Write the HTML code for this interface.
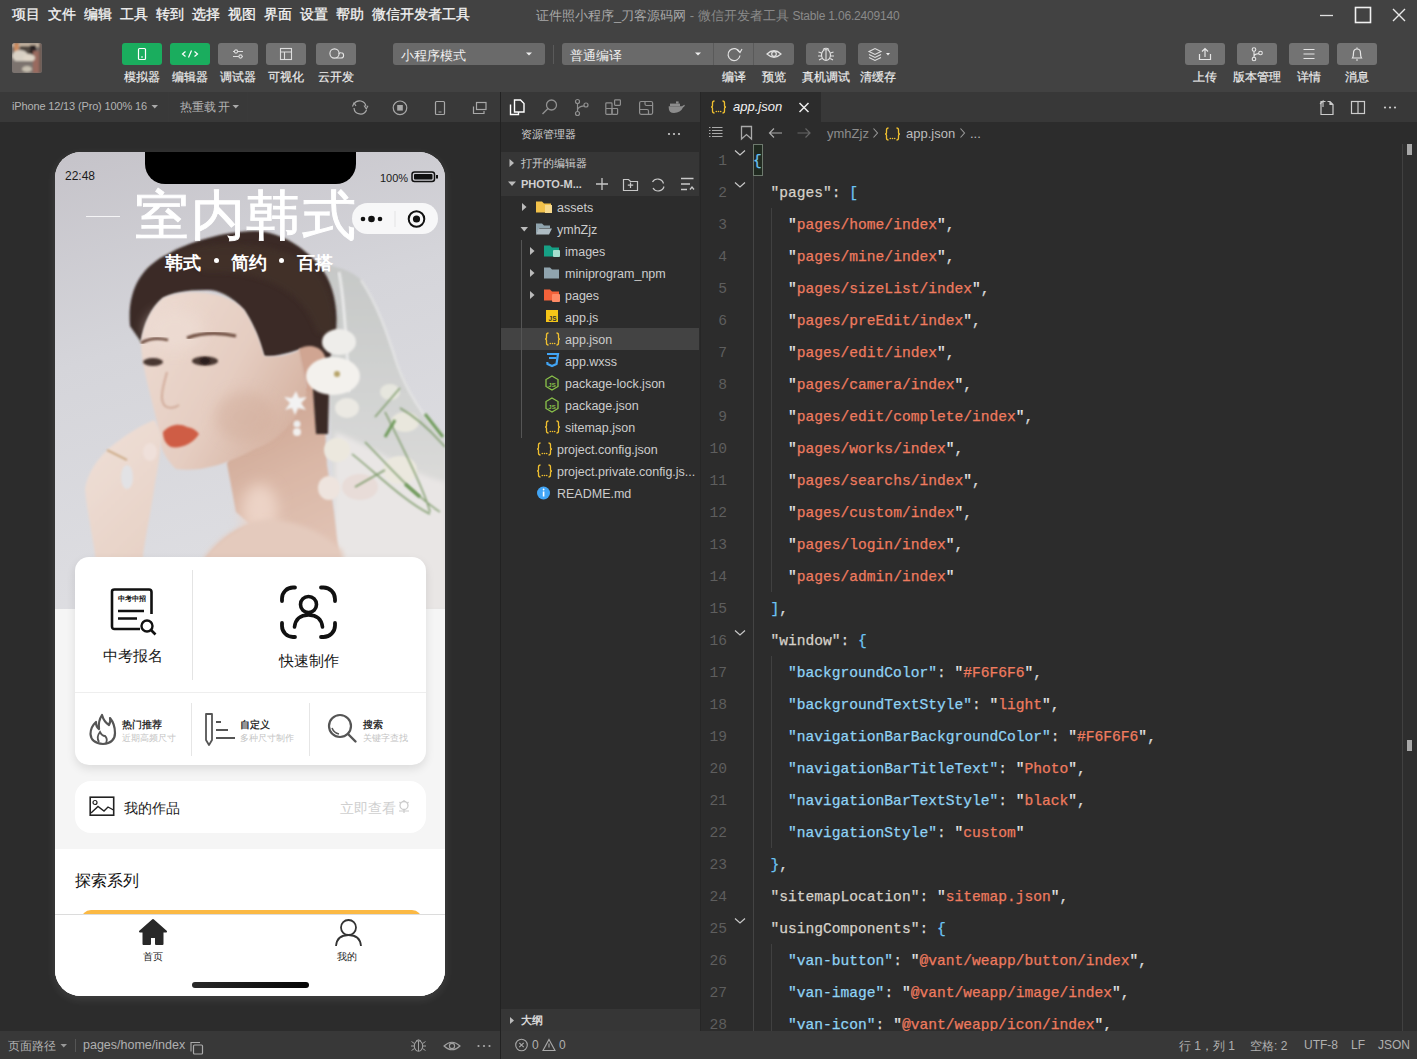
<!DOCTYPE html>
<html><head><meta charset="utf-8">
<style>
*{box-sizing:border-box;margin:0;padding:0}
html,body{width:1417px;height:1059px;overflow:hidden;background:#2c2c2c;font-family:"Liberation Sans",sans-serif;color:#ddd}
.a{position:absolute}
#top{left:0;top:0;width:1417px;height:92px;background:#424242}
.menu{top:6px;font-size:14px;color:#f4f4f4;white-space:nowrap;-webkit-text-stroke:0.3px #f4f4f4}
.tb{height:22px;border-radius:3px;background:#737373}
.tb.g{background:#1aad5e}
.tb svg{position:absolute;left:0;top:0}
.lbl{font-size:12px;color:#ececec;white-space:nowrap;width:80px;text-align:center;top:69px;-webkit-text-stroke:0.2px #e6e6e6}
svg{display:block}
.ico{stroke:#c8c8c8;fill:none;stroke-width:1.3}
.ln{left:0;width:26px;text-align:right;font-family:"Liberation Mono",monospace;font-size:14.6px;line-height:32px;color:#5e5e5e}
.code{font-family:"Liberation Mono",monospace;font-size:14.6px;line-height:32px;white-space:pre;-webkit-text-stroke:0.25px currentColor}
</style></head><body>
<div id="top" class="a">
  <div class="a menu" style="left:12px">项目</div>
  <div class="a menu" style="left:48px">文件</div>
  <div class="a menu" style="left:84px">编辑</div>
  <div class="a menu" style="left:120px">工具</div>
  <div class="a menu" style="left:156px">转到</div>
  <div class="a menu" style="left:192px">选择</div>
  <div class="a menu" style="left:228px">视图</div>
  <div class="a menu" style="left:264px">界面</div>
  <div class="a menu" style="left:300px">设置</div>
  <div class="a menu" style="left:336px">帮助</div>
  <div class="a menu" style="left:372px">微信开发者工具</div>
  <div class="a" style="left:536px;top:7px;font-size:13px;white-space:nowrap"><span style="color:#a8a8a8">证件照小程序_刀客源码网</span><span style="color:#8a8a8a"> - 微信开发者工具 <span style="font-size:12px;letter-spacing:-0.2px">Stable 1.06.2409140</span></span></div>
  <!-- window controls -->
  <svg class="a" style="left:1310px;top:0" width="107" height="30">
    <line x1="10" y1="15.5" x2="23" y2="15.5" stroke="#e0e0e0" stroke-width="1.3"/>
    <rect x="45.5" y="7.5" width="15" height="15" stroke="#f0f0f0" stroke-width="1.6" fill="none"/>
    <path d="M83 9 L95 21 M95 9 L83 21" stroke="#e8e8e8" stroke-width="1.4"/>
  </svg>
  <!-- avatar -->
  <svg class="a" style="left:12px;top:43px" width="30" height="30">
    <defs><clipPath id="av"><rect width="30" height="30" rx="2.5"/></clipPath><filter id="avb"><feGaussianBlur stdDeviation="1.1"/></filter></defs>
    <g clip-path="url(#av)">
      <rect width="30" height="30" fill="#77706c"/>
      <g filter="url(#avb)">
        <rect x="0" y="0" width="30" height="4" fill="#c9b8a4"/>
        <rect x="2" y="0" width="5" height="9" fill="#c98a5e"/>
        <rect x="8" y="3" width="12" height="10" fill="#504640"/>
        <rect x="18" y="2" width="6" height="11" fill="#2a2020"/>
        <rect x="21" y="8" width="9" height="22" fill="#9a6a5e"/>
        <ellipse cx="8" cy="13" rx="8" ry="6" fill="#d8d0c4"/>
        <ellipse cx="17" cy="15" rx="6" ry="4" fill="#e0d6c8"/>
        <rect x="0" y="18" width="21" height="12" fill="#7c736e"/>
        <ellipse cx="15" cy="26" rx="5" ry="3" fill="#c8c0b0"/>
        <rect x="27" y="0" width="3" height="30" fill="#6c5a52"/>
      </g>
    </g>
  </svg>
  <!-- left buttons -->
  <div class="a tb g" style="left:122px;top:43px;width:40px">
    <svg width="40" height="22"><rect x="16.5" y="5.5" width="7" height="11" rx="1" stroke="#fff" stroke-width="1.2" fill="none"/><line x1="19" y1="14" x2="21" y2="14" stroke="#fff" stroke-width="1"/></svg></div>
  <div class="a tb g" style="left:170px;top:43px;width:40px">
    <svg width="40" height="22"><path d="M15.5 8.5 L12.5 11 L15.5 13.5 M24.5 8.5 L27.5 11 L24.5 13.5 M21.5 7.5 L18.5 14.5" stroke="#fff" stroke-width="1.2" fill="none"/></svg></div>
  <div class="a tb" style="left:218px;top:43px;width:40px">
    <svg width="40" height="22"><path d="M15 8.5 H25 M15 13.5 H25" stroke="#ddd" stroke-width="1.1"/><circle cx="18" cy="8.5" r="1.6" fill="#6e6e6e" stroke="#ddd" stroke-width="1.1"/><circle cx="22.5" cy="13.5" r="1.6" fill="#6e6e6e" stroke="#ddd" stroke-width="1.1"/></svg></div>
  <div class="a tb" style="left:266px;top:43px;width:40px">
    <svg width="40" height="22"><rect x="14.5" y="5.5" width="11" height="11" stroke="#ddd" stroke-width="1.1" fill="none"/><path d="M14.5 9 H25.5 M18.5 9 V16.5" stroke="#ddd" stroke-width="1.1"/></svg></div>
  <div class="a tb" style="left:316px;top:43px;width:40px">
    <svg width="40" height="22"><circle cx="18.5" cy="10.5" r="4.6" stroke="#e6e6e6" stroke-width="1.1" fill="none"/><path d="M20.5 15 H25 A2.6 2.6 0 0 0 25 9.8 A2.6 2.6 0 0 0 22.8 10.8" stroke="#e6e6e6" stroke-width="1.1" fill="none"/></svg></div>
  <div class="a lbl" style="left:102px">模拟器</div>
  <div class="a lbl" style="left:150px">编辑器</div>
  <div class="a lbl" style="left:198px">调试器</div>
  <div class="a lbl" style="left:246px">可视化</div>
  <div class="a lbl" style="left:296px">云开发</div>
  <!-- mode dropdown -->
  <div class="a tb" style="left:393px;top:43px;width:152px;background:#6a6a6a">
    <div class="a" style="left:8px;top:4px;font-size:13px;color:#f0f0f0;white-space:nowrap">小程序模式</div>
    <svg width="152" height="22"><path d="M133 9.5 L139 9.5 L136 12.5 Z" fill="#eee"/></svg>
  </div>
  <div class="a" style="left:553px;top:45px;width:1px;height:19px;background:#5a5a5a"></div>
  <div class="a tb" style="left:562px;top:43px;width:232px;background:#6a6a6a">
    <div class="a" style="left:8px;top:4px;font-size:13px;color:#f0f0f0;white-space:nowrap">普通编译</div>
    <div class="a" style="left:151px;top:0;width:1px;height:22px;background:#5a5a5a"></div>
    <div class="a" style="left:191px;top:0;width:1px;height:22px;background:#5a5a5a"></div>
    <svg width="232" height="22"><path d="M133 9.5 L139 9.5 L136 12.5 Z" fill="#eee"/>
      <path d="M177.5 9 A6 6 0 1 0 178 12.5" stroke="#e0e0e0" stroke-width="1.2" fill="none"/><path d="M175 6.5 L178 9.5 L180 6" stroke="#e0e0e0" stroke-width="1.2" fill="none"/>
      <path d="M205 11 Q212 4.5 219 11 Q212 17.5 205 11 Z" stroke="#e0e0e0" stroke-width="1.2" fill="none"/><circle cx="212" cy="11" r="2.3" stroke="#e0e0e0" stroke-width="1.2" fill="none"/>
    </svg>
  </div>
  <div class="a tb" style="left:806px;top:43px;width:40px;background:#6a6a6a">
    <svg width="40" height="22"><ellipse cx="20" cy="12" rx="4.5" ry="5.5" stroke="#e0e0e0" stroke-width="1.2" fill="none"/><path d="M17 6.5 Q20 4 23 6.5 M20 7 V17 M15.5 10 L12.5 9 M15.5 13 L12 13 M15.8 15.5 L13 17 M24.5 10 L27.5 9 M24.5 13 L28 13 M24.2 15.5 L27 17" stroke="#e0e0e0" stroke-width="1.1" fill="none"/></svg></div>
  <div class="a tb" style="left:858px;top:43px;width:40px;background:#6a6a6a">
    <svg width="40" height="22"><path d="M11 8.5 L17 5.5 L23 8.5 L17 11.5 Z M11 11.5 L17 14.5 L23 11.5 M11 14.5 L17 17.5 L23 14.5" stroke="#e0e0e0" stroke-width="1.1" fill="none"/><path d="M28 10 L32 10 L30 12.5 Z" fill="#eee"/></svg></div>
  <div class="a lbl" style="left:694px">编译</div>
  <div class="a lbl" style="left:734px">预览</div>
  <div class="a lbl" style="left:786px">真机调试</div>
  <div class="a lbl" style="left:838px">清缓存</div>
  <!-- right buttons -->
  <div class="a tb" style="left:1185px;top:43px;width:40px">
    <svg width="40" height="22"><path d="M14.5 11 V16.5 H25.5 V11 M20 14 V5.5 M17 8.5 L20 5.5 L23 8.5" stroke="#e6e6e6" stroke-width="1.2" fill="none"/></svg></div>
  <div class="a tb" style="left:1237px;top:43px;width:40px">
    <svg width="40" height="22"><circle cx="17" cy="6.5" r="1.8" stroke="#e6e6e6" stroke-width="1.1" fill="none"/><circle cx="17" cy="16" r="1.8" stroke="#e6e6e6" stroke-width="1.1" fill="none"/><circle cx="23.5" cy="10" r="1.8" stroke="#e6e6e6" stroke-width="1.1" fill="none"/><path d="M17 8.3 V14.2 M17 13.5 Q17 11 21.8 10.6" stroke="#e6e6e6" stroke-width="1.1" fill="none"/></svg></div>
  <div class="a tb" style="left:1289px;top:43px;width:40px">
    <svg width="40" height="22"><path d="M14.5 6.5 H25.5 M14.5 11 H25.5 M14.5 15.5 H25.5" stroke="#e6e6e6" stroke-width="1.2"/></svg></div>
  <div class="a tb" style="left:1337px;top:43px;width:40px">
    <svg width="40" height="22"><path d="M15.5 15 Q16.5 13.5 16.5 10 Q16.5 6 20 6 Q23.5 6 23.5 10 Q23.5 13.5 24.5 15 Z M19 17 H21 M20 4.5 V6" stroke="#e6e6e6" stroke-width="1.2" fill="none"/></svg></div>
  <div class="a lbl" style="left:1165px">上传</div>
  <div class="a lbl" style="left:1217px">版本管理</div>
  <div class="a lbl" style="left:1269px">详情</div>
  <div class="a lbl" style="left:1317px">消息</div>
</div>
<!-- simulator toolbar -->
<div class="a" style="left:0;top:92px;width:500px;height:30px;background:#393939">
  <div class="a" style="left:12px;top:8px;font-size:11px;color:#b4b4b4;white-space:nowrap;letter-spacing:-0.15px">iPhone 12/13 (Pro) 100% 16</div>
  <svg class="a" style="left:151px;top:12px" width="8" height="6"><path d="M0.5 1 L7 1 L3.75 4.5 Z" fill="#aaa"/></svg>
  <div class="a" style="left:168px;top:0;width:1px;height:30px;background:#3a3a3a"></div>
  <div class="a" style="left:180px;top:8px;font-size:11.5px;color:#b4b4b4;white-space:nowrap;word-spacing:-1px">热重载 开</div>
  <svg class="a" style="left:232px;top:12px" width="8" height="6"><path d="M0.5 1 L7 1 L3.75 4.5 Z" fill="#aaa"/></svg>
  <div class="a" style="left:247px;top:0;width:1px;height:30px;background:#3a3a3a"></div>
  <svg class="a" style="left:340px;top:92px;top:0" width="160" height="30">
    <path d="M14 12 A6.5 6.5 0 0 1 26 14.5 M26.5 18 A6.5 6.5 0 0 1 14 16" stroke="#a8a8a8" stroke-width="1.2" fill="none"/>
    <path d="M12.5 14.5 L14 11 L16 14" stroke="#a8a8a8" stroke-width="1.1" fill="none"/>
    <path d="M24 13.5 L26.3 17 L28 13.8" stroke="#a8a8a8" stroke-width="1.1" fill="none"/>
    <circle cx="60" cy="15.8" r="6.8" stroke="#a8a8a8" stroke-width="1.2" fill="none"/>
    <rect x="57.2" y="13" width="5.6" height="5.6" fill="#a8a8a8"/>
    <rect x="95.5" y="9.5" width="9" height="13" rx="1" stroke="#a8a8a8" stroke-width="1.2" fill="none"/>
    <line x1="98.5" y1="20" x2="101.5" y2="20" stroke="#a8a8a8" stroke-width="1"/>
    <path d="M133.5 14.5 V21.5 H144 V19" stroke="#a8a8a8" stroke-width="1.2" fill="none"/>
    <rect x="136.5" y="10.5" width="9.5" height="7" stroke="#a8a8a8" stroke-width="1.2" fill="none"/>
  </svg>
</div>
<div class="a" style="left:500px;top:92px;width:1px;height:967px;background:#222"></div>
<!-- simulator status bar -->
<div class="a" style="left:0;top:1031px;width:500px;height:28px;background:#383838">
  <div class="a" style="left:8px;top:7px;font-size:12px;color:#b0b0b0;white-space:nowrap">页面路径</div>
  <svg class="a" style="left:60px;top:12px" width="8" height="6"><path d="M0.5 1 L7 1 L3.75 4.5 Z" fill="#999"/></svg>
  <div class="a" style="left:75px;top:8px;width:1px;height:13px;background:#555"></div>
  <div class="a" style="left:83px;top:7px;font-size:12.5px;color:#b0b0b0;white-space:nowrap">pages/home/index</div>
  <svg class="a" style="left:188px;top:8px" width="16" height="16"><path d="M3 12.5 V3.5 H12" stroke="#aaa" stroke-width="1.1" fill="none"/><rect x="5.5" y="6" width="9" height="9" rx="1" stroke="#aaa" stroke-width="1.2" fill="none"/></svg>
  <svg class="a" style="left:405px;top:0" width="95" height="28">
    <ellipse cx="13.5" cy="15" rx="4.2" ry="5.3" stroke="#a0a0a0" stroke-width="1.1" fill="none"/>
    <path d="M11 10 Q13.5 7.5 16 10 M13.5 10 V20 M9.3 12.5 L6.5 10.5 M9.2 15 L6 15 M9.5 17.5 L6.5 19.5 M17.7 12.5 L20.5 10.5 M17.8 15 L21 15 M17.5 17.5 L20.5 19.5" stroke="#a0a0a0" stroke-width="1" fill="none"/>
    <path d="M39 15 Q47 7.5 55 15 Q47 22.5 39 15 Z" stroke="#a0a0a0" stroke-width="1.1" fill="none"/><circle cx="47" cy="15" r="2.6" stroke="#a0a0a0" stroke-width="1.1" fill="none"/>
    <circle cx="73.5" cy="15" r="1.1" fill="#aaa"/><circle cx="79" cy="15" r="1.1" fill="#aaa"/><circle cx="84.5" cy="15" r="1.1" fill="#aaa"/>
  </svg>
</div>
<!-- phone -->
<div class="a" style="left:55px;top:152px;width:390px;height:844px;border-radius:26px;overflow:hidden;background:#f5f5f5;box-shadow:0 3px 9px 1px rgba(255,255,255,0.09)">
  <!-- photo -->
  <svg class="a" style="left:0;top:0" width="390" height="457" viewBox="0 0 390 457">
    <defs>
      <linearGradient id="bg" x1="0" y1="0" x2="0.25" y2="1">
        <stop offset="0" stop-color="#c5c3c9"/><stop offset="0.45" stop-color="#d5d5da"/><stop offset="1" stop-color="#dedee2"/>
      </linearGradient>
      <filter id="b1" x="-20%" y="-20%" width="140%" height="140%"><feGaussianBlur stdDeviation="1.2"/></filter>
      <filter id="b2" x="-20%" y="-20%" width="140%" height="140%"><feGaussianBlur stdDeviation="2.5"/></filter>
      <filter id="b5" x="-40%" y="-40%" width="180%" height="180%"><feGaussianBlur stdDeviation="7"/></filter>
      <linearGradient id="face" x1="0" y1="0" x2="1" y2="0.6">
        <stop offset="0" stop-color="#eddcd3"/><stop offset="0.6" stop-color="#e5cdc1"/><stop offset="1" stop-color="#d6b3a2"/>
      </linearGradient>
      <linearGradient id="neck" x1="0" y1="0" x2="0.3" y2="1">
        <stop offset="0" stop-color="#c79d8a"/><stop offset="0.5" stop-color="#d9b6a5"/><stop offset="1" stop-color="#e3c6b8"/>
      </linearGradient>
      <linearGradient id="hand" x1="0" y1="0" x2="0.4" y2="1">
        <stop offset="0" stop-color="#efe0d8"/><stop offset="1" stop-color="#e6d0c4"/>
      </linearGradient>
      <linearGradient id="veil" x1="0" y1="0" x2="0" y2="1">
        <stop offset="0" stop-color="#c6c8c7"/><stop offset="0.45" stop-color="#d4d5d4"/><stop offset="1" stop-color="#e8e5e3"/>
      </linearGradient>
    </defs>
    <rect width="390" height="457" fill="url(#bg)"/>
    <!-- veil -->
    <path d="M270 112 C288 116 302 122 308 130 C320 150 328 170 336 195 C348 230 362 255 376 272 C384 282 390 288 390 292 L390 457 L272 457 L280 360 L276 280 Z" fill="url(#veil)" filter="url(#b1)"/>
    <path d="M284 120 C290 150 292 200 294 240" stroke="#eeeeee" stroke-width="3" fill="none" opacity=".85" filter="url(#b1)"/>
    <path d="M306 128 C322 152 332 180 342 212 C352 240 366 262 388 286" stroke="#e9e9e9" stroke-width="2.5" fill="none" opacity=".7" filter="url(#b1)"/>
    <path d="M280 280 C310 290 350 320 390 330 L390 457 L280 457 Z" fill="#e9e6e5" filter="url(#b2)"/>
    <!-- neck & shoulder -->
    <path d="M176 296 L172 312 L181 360 L195 372 C175 380 160 392 148 410 L148 457 L290 457 L284 404 L279 360 L272 313 L268 236 L210 236 Z" fill="url(#neck)" filter="url(#b1)"/>
    <ellipse cx="205" cy="358" rx="18" ry="26" fill="#ecd3c6" filter="url(#b5)"/>
    <path d="M150 404 C165 385 185 372 205 368 C235 365 270 380 288 400 L290 457 L140 457 Z" fill="#e4cabd" filter="url(#b2)"/>
    <!-- hair -->
    <path d="M75 174 C72 140 85 115 113 102 C135 90 165 80 200 79 C225 80 248 94 265 114 C277 129 283 153 281 175 C280 189 277 198 274 210 L274 240 L273 282 L261 282 L258 238 L246 197 C230 202 215 206 209 204 C205 190 200 175 189 158 C175 142 160 137 151 138 C130 138 117 141 108 146 C96 156 89 172 86 190 Z" fill="#3a2c26" filter="url(#b1)"/>
    <path d="M120 100 C160 88 220 88 255 112 C275 130 282 160 280 185 L262 180 C250 140 210 118 150 120 Z" fill="#45342c" opacity=".6" filter="url(#b2)"/>
    <!-- face -->
    <path d="M86 190 C89 172 96 156 108 146 C130 136 172 138 189 158 C200 175 205 190 209 204 C225 206 238 202 246 197 L252 240 C242 270 222 290 200 297 C179 308 151 321 121 317 C110 306 104 296 102 270 C95 240 86 212 86 190 Z" fill="url(#face)" filter="url(#b1)"/>
    <ellipse cx="120" cy="178" rx="28" ry="20" fill="#eddcd3" opacity=".8" filter="url(#b5)"/>
    <ellipse cx="190" cy="265" rx="30" ry="25" fill="#d2ad9b" opacity=".5" filter="url(#b5)"/>
    <!-- ear -->
    <path d="M244 197 C255 190 272 195 271 212 C270 226 262 236 252 240 Z" fill="#d0a592" filter="url(#b1)"/>
    <!-- brows/eyes -->
    <path d="M86 191 Q98 184 113 188" stroke="#6e4d40" stroke-width="2.8" fill="none" filter="url(#b1)"/>
    <path d="M132 186 Q155 178 181 184" stroke="#6e4d40" stroke-width="3.2" fill="none" filter="url(#b1)"/>
    <ellipse cx="98" cy="210" rx="10" ry="4" fill="#4a3832" filter="url(#b1)"/>
    <ellipse cx="150" cy="209" rx="13" ry="4.5" fill="#4a3832" filter="url(#b1)"/>
    <ellipse cx="150" cy="209" rx="5" ry="3.5" fill="#2a1e1a" filter="url(#b1)"/>
    <!-- nose -->
    <path d="M112 220 C108 235 104 248 110 254 C114 257 120 256 124 253" stroke="#c89c88" stroke-width="2" fill="none" opacity=".7" filter="url(#b1)"/>
    <!-- lips -->
    <path d="M108 280 C115 272 125 271 132 275 C138 276 142 279 144 282 C138 292 125 297 116 295 C110 292 108 286 108 280 Z" fill="#cf5d45" filter="url(#b1)"/>
    <!-- hand -->
    <path d="M99 268 C85 274 70 283 53 297 C42 308 33 320 30 337 C32 360 38 385 41 410 L41 457 L86 457 L88 404 C91 380 96 360 100 331 C104 310 106 296 106 285 C104 276 101 270 99 268 Z" fill="url(#hand)" filter="url(#b1)"/>
    <ellipse cx="72" cy="325" rx="6" ry="12" fill="#e2e2e5" filter="url(#b1)"/>
    <path d="M52 298 L72 308" stroke="#c6a27a" stroke-width="1.6" filter="url(#b1)"/>
    <ellipse cx="95" cy="300" rx="7" ry="9" fill="#efe0da" filter="url(#b1)"/>
    <!-- flowers -->
    <ellipse cx="284" cy="190" rx="17" ry="13" fill="#eeedea" filter="url(#b1)"/>
    <ellipse cx="278" cy="224" rx="27" ry="19" fill="#f3f1ed" filter="url(#b1)"/>
    <circle cx="282" cy="222" r="3" fill="#b7a46a" filter="url(#b1)"/>
    <ellipse cx="292" cy="256" rx="12" ry="10" fill="#ebe9e3" filter="url(#b1)"/>
    <ellipse cx="282" cy="298" rx="13" ry="12" fill="#ece8de" filter="url(#b1)"/>
    <ellipse cx="274" cy="336" rx="11" ry="12" fill="#eee4de" filter="url(#b1)"/>
    <ellipse cx="305" cy="335" rx="18" ry="13" fill="#e8dcd8" filter="url(#b1)"/>
    <ellipse cx="345" cy="318" rx="17" ry="14" fill="#ebe8de" filter="url(#b1)"/>
    <ellipse cx="350" cy="270" rx="14" ry="10" fill="#e9e7dd" filter="url(#b1)"/>
    <ellipse cx="335" cy="240" rx="10" ry="8" fill="#e6e6de" filter="url(#b1)"/>
    <path d="M297 302 C320 320 350 350 375 362 M310 290 C330 310 355 340 385 360 M330 260 C350 300 370 340 375 360 M345 256 C370 270 385 290 390 295 M320 265 L345 236 M300 335 L330 318" stroke="#7f9c6c" stroke-width="1.5" fill="none" filter="url(#b1)"/>
    <path d="M370 262 L388 285 M350 332 L365 345 M330 285 L340 268" stroke="#6e9a5a" stroke-width="3" fill="none" filter="url(#b1)"/>
    <!-- earring -->
    <path d="M241 239 L244 246 L252 245 L246 251 L251 258 L243 256 L240 263 L237 256 L230 258 L235 251 L229 245 L237 246 Z" fill="#f2f2f2" filter="url(#b1)"/>
    <circle cx="242" cy="272" r="3.5" fill="#eeeeee" filter="url(#b1)"/>
    <circle cx="242" cy="280" r="4" fill="#f2f0ee" filter="url(#b1)"/>
  </svg>
  <!-- notch -->
  <div class="a" style="left:90px;top:-1px;width:211px;height:33px;background:#000;border-radius:0 0 20px 20px"></div>
  <div class="a" style="left:10px;top:17px;font-size:12px;color:#1a1a1a">22:48</div>
  <div class="a" style="left:325px;top:20px;font-size:11px;color:#1a1a1a">100%</div>
  <svg class="a" style="left:356px;top:19px" width="28" height="12"><rect x="1" y="1" width="22.5" height="9.5" rx="2.5" stroke="#111" stroke-width="1.5" fill="none"/><rect x="3" y="3" width="18.5" height="5.5" rx="1" fill="#111"/><rect x="25" y="4" width="2" height="3.5" fill="#111"/></svg>
  <!-- title -->
  <div class="a" style="left:31px;top:64px;width:34px;height:1px;background:rgba(255,255,255,.8)"></div>
  <div class="a" style="left:80px;top:34px;font-family:'Liberation Serif',serif;font-size:54px;line-height:60px;color:#fff;white-space:nowrap;letter-spacing:1.5px;-webkit-text-stroke:0.9px #fff">室内韩式</div>
  <div class="a" style="left:110px;top:99px;font-family:'Liberation Serif',serif;font-size:18px;font-weight:bold;color:#fff;white-space:nowrap">韩式</div>
  <div class="a" style="left:159px;top:106px;width:5px;height:5px;border-radius:50%;background:#fff"></div>
  <div class="a" style="left:176px;top:99px;font-family:'Liberation Serif',serif;font-size:18px;font-weight:bold;color:#fff;white-space:nowrap">简约</div>
  <div class="a" style="left:224px;top:106px;width:5px;height:5px;border-radius:50%;background:#fff"></div>
  <div class="a" style="left:242px;top:99px;font-family:'Liberation Serif',serif;font-size:18px;font-weight:bold;color:#fff;white-space:nowrap">百搭</div>
  <!-- capsule -->
  <div class="a" style="left:297px;top:51px;width:86px;height:31px;border-radius:16px;background:rgba(255,255,255,.82)">
    <svg class="a" style="left:0;top:0" width="86" height="31">
      <circle cx="11" cy="16" r="2.3" fill="#111"/><circle cx="19.5" cy="16" r="3.3" fill="#111"/><circle cx="28" cy="16" r="2.3" fill="#111"/>
      <line x1="43" y1="8" x2="43" y2="24" stroke="rgba(0,0,0,.08)" stroke-width="1"/>
      <circle cx="64.5" cy="16" r="7.8" stroke="#111" stroke-width="2" fill="none"/><circle cx="64.5" cy="16" r="3.6" fill="#111"/>
    </svg>
  </div>
  <!-- main card -->
  <div class="a" style="left:20px;top:405px;width:351px;height:208px;border-radius:14px;background:#fff;box-shadow:0 4px 10px rgba(0,0,0,.10)">
    <div class="a" style="left:117px;top:13px;width:1px;height:110px;background:#e4e4e4"></div>
    <div class="a" style="left:0;top:135px;width:351px;height:1px;background:#eeeeee"></div>
    <div class="a" style="left:116px;top:146px;width:1px;height:53px;background:#e6e6e6"></div>
    <div class="a" style="left:234px;top:146px;width:1px;height:53px;background:#e6e6e6"></div>
    <!-- doc icon -->
    <svg class="a" style="left:35px;top:31px" width="50" height="50">
      <path d="M30 41 H4.5 Q2 41 2 38.5 V3.5 Q2 1.5 4.5 1.5 H39 Q41.5 1.5 41.5 4 V26" stroke="#111" stroke-width="2.6" fill="none"/>
      <path d="M8 23 H34 M8 30.5 H27" stroke="#111" stroke-width="2.4"/>
      <circle cx="37" cy="38" r="5.5" stroke="#111" stroke-width="2.4" fill="none"/>
      <path d="M41 42 L45.5 46.5" stroke="#111" stroke-width="2.6"/>
      <text x="21.5" y="13" font-size="7" font-weight="bold" text-anchor="middle" fill="#111" font-family="Liberation Sans">中考中招</text>
    </svg>
    <div class="a" style="left:28px;top:90px;font-size:15px;color:#1a1a1a;white-space:nowrap">中考报名</div>
    <!-- face scan icon -->
    <svg class="a" style="left:203px;top:27px" width="64" height="60">
      <path d="M4 17 V14.5 A11 11 0 0 1 15 3.5 H17 M43 3.5 H45.5 A11.5 11.5 0 0 1 57 15 V17 M57 39 V41.5 A11.5 11.5 0 0 1 45.5 53 H43 M17 53 H15 A11 11 0 0 1 4 42 V39" stroke="#111" stroke-width="3.8" fill="none" stroke-linecap="round"/>
      <circle cx="30.5" cy="20.5" r="8" stroke="#111" stroke-width="3.6" fill="none"/>
      <path d="M16.5 43 Q18 31 30.5 31 Q43 31 44.5 43" stroke="#111" stroke-width="3.6" fill="none" stroke-linecap="round"/>
    </svg>
    <div class="a" style="left:204px;top:95px;font-size:15px;color:#1a1a1a;white-space:nowrap">快速制作</div>
    <!-- fire -->
    <svg class="a" style="left:13px;top:155px" width="30" height="34">
      <path d="M14 3 Q16 10 21 13 Q23 9 22 6 Q27 12 27 21 Q27 31 15 32 Q3 31 2.5 22 Q2.5 15 8 10 Q8 15 11 17 Q10 9 14 3 Z" stroke="#555" stroke-width="2.2" fill="none" stroke-linejoin="round"/>
      <path d="M11 30 Q8 25 12 20 Q14 24 17 24 Q20 27 18 31" stroke="#555" stroke-width="1.8" fill="none"/>
    </svg>
    <div class="a" style="left:47px;top:161px;font-size:10px;color:#111;white-space:nowrap;-webkit-text-stroke:0.25px #111">热门推荐</div>
    <div class="a" style="left:47px;top:175px;font-size:9px;color:#c4c4c4;white-space:nowrap">近期高频尺寸</div>
    <!-- custom -->
    <svg class="a" style="left:129px;top:155px" width="34" height="34">
      <path d="M2 2 H8 V28 L5 33 L2 28 Z" stroke="#555" stroke-width="1.8" fill="none" stroke-linejoin="round"/>
      <path d="M12 10 H17 M12 18 H24 M12 26 H31" stroke="#555" stroke-width="2"/>
    </svg>
    <div class="a" style="left:165px;top:161px;font-size:10px;color:#111;white-space:nowrap;-webkit-text-stroke:0.25px #111">自定义</div>
    <div class="a" style="left:165px;top:175px;font-size:9px;color:#c4c4c4;white-space:nowrap">多种尺寸制作</div>
    <!-- search -->
    <svg class="a" style="left:252px;top:156px" width="32" height="32">
      <circle cx="13" cy="13" r="11" stroke="#555" stroke-width="2.2" fill="none"/>
      <path d="M21 21 L28.5 28.5" stroke="#555" stroke-width="2.4" stroke-linecap="round"/>
      <path d="M5 15 Q7 20 12 21" stroke="#555" stroke-width="1.6" fill="none"/>
    </svg>
    <div class="a" style="left:288px;top:161px;font-size:10px;color:#111;white-space:nowrap;-webkit-text-stroke:0.25px #111">搜索</div>
    <div class="a" style="left:288px;top:175px;font-size:9px;color:#c4c4c4;white-space:nowrap">关键字查找</div>
  </div>
  <!-- works card -->
  <div class="a" style="left:20px;top:629px;width:351px;height:52px;border-radius:16px;background:#fff">
    <svg class="a" style="left:14px;top:15px" width="28" height="22">
      <rect x="1.2" y="1.2" width="23.5" height="18" stroke="#222" stroke-width="1.6" fill="none"/>
      <circle cx="6" cy="6.5" r="2" stroke="#222" stroke-width="1.2" fill="none"/>
      <path d="M2 17 L9 10.5 L15 15 L19 11 L24.5 14" stroke="#222" stroke-width="1.4" fill="none"/>
    </svg>
    <div class="a" style="left:49px;top:19px;font-size:14px;color:#1a1a1a;white-space:nowrap">我的作品</div>
    <div class="a" style="left:265px;top:19px;font-size:13.5px;color:#cfcfcf;white-space:nowrap">立即查看</div>
    <svg class="a" style="left:322px;top:18px" width="14" height="16"><circle cx="7" cy="6.5" r="4" stroke="#ccc" stroke-width="1.3" fill="none"/><path d="M7 1 V3 M7 10 V14 M2 12 L12 12 M2.5 3 L4 4.5 M11.5 3 L10 4.5" stroke="#ccc" stroke-width="1.2"/></svg>
  </div>
  <!-- explore section -->
  <div class="a" style="left:0;top:697px;width:390px;height:147px;background:#fff">
    <div class="a" style="left:20px;top:22px;font-size:16px;color:#111;white-space:nowrap">探索系列</div>
    <div class="a" style="left:26px;top:61px;width:341px;height:20px;border-radius:10px 10px 0 0;background:#fbb944"></div>
  </div>
  <!-- tabbar -->
  <div class="a" style="left:0;top:762px;width:390px;height:82px;background:#fff;border-top:1px solid #dcdcdc">
    <svg class="a" style="left:83px;top:3px" width="30" height="28">
      <path d="M15 2 L28 13.5 H24.5 V26 H18 V19 H12 V26 H5.5 V13.5 H2 Z" fill="#282828" stroke="#282828" stroke-width="2" stroke-linejoin="round"/>
    </svg>
    <div class="a" style="left:88px;top:35px;font-size:10px;color:#222;white-space:nowrap">首页</div>
    <svg class="a" style="left:279px;top:3px" width="30" height="30">
      <circle cx="14.5" cy="9.5" r="7.5" stroke="#333" stroke-width="1.8" fill="none"/>
      <path d="M2 28 Q3 17 14.5 17 Q26 17 27 28" stroke="#333" stroke-width="1.8" fill="none"/>
    </svg>
    <div class="a" style="left:282px;top:35px;font-size:10px;color:#222;white-space:nowrap">我的</div>
    <div class="a" style="left:137px;top:67px;width:117px;height:6px;border-radius:3px;background:linear-gradient(90deg,#2a2a2a,#050505)"></div>
  </div>
</div>
<!-- explorer -->
<div class="a" style="left:501px;top:92px;width:199px;height:939px;background:#2c2c2c">
  <div class="a" style="left:0;top:0;width:199px;height:30px;background:#373737"></div>
  <svg class="a" style="left:1px;top:0" width="198" height="30">
    <!-- files icon -->
    <path d="M8.5 12.5 V22.5 H16.5 V20" stroke="#fff" stroke-width="1.4" fill="none"/>
    <path d="M12.5 8 H18.5 L22 11.5 V20 H12.5 Z" stroke="#fff" stroke-width="1.4" fill="none"/>
    <!-- search -->
    <circle cx="49.5" cy="13" r="5" stroke="#909090" stroke-width="1.3" fill="none"/>
    <path d="M46 16.5 L40.5 22" stroke="#909090" stroke-width="1.4"/>
    <!-- git -->
    <circle cx="75.5" cy="9.5" r="2" stroke="#909090" stroke-width="1.2" fill="none"/>
    <circle cx="75.5" cy="21.5" r="2" stroke="#909090" stroke-width="1.2" fill="none"/>
    <circle cx="84" cy="13" r="2" stroke="#909090" stroke-width="1.2" fill="none"/>
    <path d="M75.5 11.5 V19.5 M75.5 18 Q76 14.5 82 13.8" stroke="#909090" stroke-width="1.2" fill="none"/>
    <!-- extensions -->
    <rect x="103.8" y="10.9" width="6.2" height="5.6" rx="0.8" stroke="#909090" stroke-width="1.2" fill="none"/>
    <rect x="103.8" y="16.5" width="6.2" height="5.8" rx="0.8" stroke="#909090" stroke-width="1.2" fill="none"/>
    <rect x="110" y="16.5" width="5.6" height="5.8" rx="0.8" stroke="#909090" stroke-width="1.2" fill="none"/>
    <rect x="112.6" y="7.8" width="5.8" height="5.6" rx="0.8" stroke="#909090" stroke-width="1.2" fill="none"/>
    <!-- layout -->
    <rect x="137.6" y="9.5" width="13" height="12.8" rx="1.5" stroke="#909090" stroke-width="1.2" fill="none"/>
    <path d="M143 9.5 V12 Q143 13.5 144.5 13.5 H150.6 M137.6 17.5 H145 Q146.5 17.5 146.5 19 V22.3" stroke="#909090" stroke-width="1.2" fill="none"/>
    <!-- docker whale -->
    <path d="M166.7 14.3 H180 Q181.5 13.2 183 12.8 Q182.6 14.8 181 15.6 Q178.5 21 172 21 Q166.7 21 166.7 15.5 Z" fill="#8c8c8c"/>
    <rect x="168" y="11.6" width="10" height="2.5" fill="#8c8c8c"/>
    <rect x="174" y="9.4" width="2.6" height="2.2" fill="#8c8c8c"/>
  </svg>
  <div class="a" style="left:20px;top:35px;font-size:11px;color:#d0d0d0;white-space:nowrap">资源管理器</div>
  <svg class="a" style="left:165px;top:38px" width="16" height="8"><circle cx="3" cy="4" r="1.1" fill="#ccc"/><circle cx="8" cy="4" r="1.1" fill="#ccc"/><circle cx="13" cy="4" r="1.1" fill="#ccc"/></svg>
  <div class="a" style="left:0;top:60px;width:198px;height:44px;background:#363636"></div>
  <svg class="a" style="left:7px;top:66px" width="8" height="10"><path d="M1.5 1 L6 5 L1.5 9 Z" fill="#bbb"/></svg>
  <div class="a" style="left:20px;top:64px;font-size:11px;color:#d0d0d0;white-space:nowrap">打开的编辑器</div>
  <svg class="a" style="left:6px;top:88px" width="10" height="8"><path d="M1 1.5 L9 1.5 L5 6 Z" fill="#bbb"/></svg>
  <div class="a" style="left:20px;top:86px;font-size:11px;font-weight:bold;color:#d0d0d0;white-space:nowrap">PHOTO-M...</div>
  <svg class="a" style="left:91px;top:82px" width="108" height="20">
    <path d="M10 4 V16 M4 10 H16" stroke="#c8c8c8" stroke-width="1.3"/>
    <path d="M31.5 5.5 V16.5 H45.5 V7.5 H38.5 L36.5 5.5 Z M38.5 8.5 V14 M35.8 11.2 H41.2" stroke="#c8c8c8" stroke-width="1.2" fill="none"/>
    <path d="M60.5 8 A6 6 0 0 1 71.5 9.5 M72 12.5 A6 6 0 0 1 61 14" stroke="#c8c8c8" stroke-width="1.2" fill="none"/>
    <path d="M89 4.5 H101.5 M89 10 H98 M89 15.5 H95 M98 15.5 L100 13 L102 15.5" stroke="#c8c8c8" stroke-width="1.3" fill="none"/>
  </svg>
  <!-- tree -->
  <div class="a" style="left:0;top:236px;width:198px;height:22px;background:#434343"></div>
  <div class="a" style="left:20px;top:148px;width:1px;height:198px;background:#555"></div>
  <div style="position:absolute;left:1px;top:104px;width:198px;font-size:12.5px;color:#cccccc">
    <div class="a" style="left:55px;top:5px">assets</div>
    <div class="a" style="left:55px;top:27px">ymhZjz</div>
    <div class="a" style="left:63px;top:49px">images</div>
    <div class="a" style="left:63px;top:71px">miniprogram_npm</div>
    <div class="a" style="left:63px;top:93px">pages</div>
    <div class="a" style="left:63px;top:115px">app.js</div>
    <div class="a" style="left:63px;top:137px">app.json</div>
    <div class="a" style="left:63px;top:159px">app.wxss</div>
    <div class="a" style="left:63px;top:181px">package-lock.json</div>
    <div class="a" style="left:63px;top:203px">package.json</div>
    <div class="a" style="left:63px;top:225px">sitemap.json</div>
    <div class="a" style="left:55px;top:247px">project.config.json</div>
    <div class="a" style="left:55px;top:269px;white-space:nowrap">project.private.config.js...</div>
    <div class="a" style="left:55px;top:291px">README.md</div>
  </div>
  <svg class="a" style="left:1px;top:104px" width="198" height="310">
    <!-- arrows -->
    <path d="M20 7 L24.5 11 L20 15 Z" fill="#bbb"/>
    <path d="M18.5 31 L26 31 L22.25 35.5 Z" fill="#bbb"/>
    <path d="M28 51 L32.5 55 L28 59 Z" fill="#bbb"/>
    <path d="M28 73 L32.5 77 L28 81 Z" fill="#bbb"/>
    <path d="M28 95 L32.5 99 L28 103 Z" fill="#bbb"/>
    <!-- assets folder (yellow) -->
    <path d="M34 5.5 H40 L42 7.5 H49 V16.5 H34 Z" fill="#f2c14a"/>
    <rect x="43" y="9" width="7" height="8" fill="#f7d98c"/>
    <!-- ymhZjz open folder grey -->
    <path d="M34 27.5 H40 L42 29.5 H48 V32 H37.5 L34 38.5 Z" fill="#90a4ae"/>
    <path d="M36.5 32.5 H50 L47 38.5 H34 Z" fill="#aebbc2"/>
    <!-- images folder teal -->
    <path d="M42 49.5 H48 L50 51.5 H57 V60.5 H42 Z" fill="#16a085"/>
    <rect x="51" y="54" width="7" height="7" rx="1" fill="#a6e0cf"/>
    <!-- npm folder grey -->
    <path d="M42 71.5 H48 L50 73.5 H57 V82.5 H42 Z" fill="#90a4ae"/>
    <!-- pages folder orange -->
    <path d="M42 93.5 H48 L50 95.5 H57 V104.5 H42 Z" fill="#f4623a"/>
    <rect x="50" y="98" width="8" height="8" rx="1" fill="#ff8a65"/>
    <!-- app.js -->
    <rect x="44" y="114" width="12" height="12" fill="#f5c518"/>
    <text x="50.5" y="124.5" font-size="6.5" font-weight="bold" fill="#333" text-anchor="middle" font-family="Liberation Sans">JS</text>
    <!-- json braces -->
    <g transform="translate(42,136)"><path d="M4.5 1 Q2.5 1 2.5 3 V5.5 Q2.5 7 1 7 Q2.5 7 2.5 8.5 V11 Q2.5 13 4.5 13 M12.5 1 Q14.5 1 14.5 3 V5.5 Q14.5 7 16.0 7 Q14.5 7 14.5 8.5 V11 Q14.5 13 12.5 13" stroke="#f0c030" stroke-width="1.3" fill="none"/><circle cx="6.3" cy="11.5" r="0.8" fill="#f0c030"/><circle cx="8.5" cy="11.5" r="0.8" fill="#f0c030"/><circle cx="10.7" cy="11.5" r="0.8" fill="#f0c030"/></g>
    <!-- wxss -->
    <path d="M45 158 H56 L54.5 168 L50 170 L45.5 168 L45.3 166" stroke="#42a5f5" stroke-width="2.2" fill="none"/>
    <path d="M47 162 H54.5" stroke="#42a5f5" stroke-width="2"/>
    <!-- node hexes -->
    <path d="M50 180 L56 183.5 V190.5 L50 194 L44 190.5 V183.5 Z" stroke="#8bc34a" stroke-width="1.3" fill="none"/>
    <path d="M50 202 L56 205.5 V212.5 L50 216 L44 212.5 V205.5 Z" stroke="#8bc34a" stroke-width="1.3" fill="none"/>
    <g transform="translate(42,224)"><path d="M4.5 1 Q2.5 1 2.5 3 V5.5 Q2.5 7 1 7 Q2.5 7 2.5 8.5 V11 Q2.5 13 4.5 13 M12.5 1 Q14.5 1 14.5 3 V5.5 Q14.5 7 16.0 7 Q14.5 7 14.5 8.5 V11 Q14.5 13 12.5 13" stroke="#f0c030" stroke-width="1.3" fill="none"/><circle cx="6.3" cy="11.5" r="0.8" fill="#f0c030"/><circle cx="8.5" cy="11.5" r="0.8" fill="#f0c030"/><circle cx="10.7" cy="11.5" r="0.8" fill="#f0c030"/></g>
    <g transform="translate(34,246)"><path d="M4.5 1 Q2.5 1 2.5 3 V5.5 Q2.5 7 1 7 Q2.5 7 2.5 8.5 V11 Q2.5 13 4.5 13 M12.5 1 Q14.5 1 14.5 3 V5.5 Q14.5 7 16.0 7 Q14.5 7 14.5 8.5 V11 Q14.5 13 12.5 13" stroke="#f0c030" stroke-width="1.3" fill="none"/><circle cx="6.3" cy="11.5" r="0.8" fill="#f0c030"/><circle cx="8.5" cy="11.5" r="0.8" fill="#f0c030"/><circle cx="10.7" cy="11.5" r="0.8" fill="#f0c030"/></g>
    <g transform="translate(34,268)"><path d="M4.5 1 Q2.5 1 2.5 3 V5.5 Q2.5 7 1 7 Q2.5 7 2.5 8.5 V11 Q2.5 13 4.5 13 M12.5 1 Q14.5 1 14.5 3 V5.5 Q14.5 7 16.0 7 Q14.5 7 14.5 8.5 V11 Q14.5 13 12.5 13" stroke="#f0c030" stroke-width="1.3" fill="none"/><circle cx="6.3" cy="11.5" r="0.8" fill="#f0c030"/><circle cx="8.5" cy="11.5" r="0.8" fill="#f0c030"/><circle cx="10.7" cy="11.5" r="0.8" fill="#f0c030"/></g>
    <circle cx="41.5" cy="297" r="6.5" fill="#42a5f5"/>
    <rect x="40.8" y="295.5" width="1.6" height="5" fill="#fff"/><circle cx="41.6" cy="293.5" r="0.9" fill="#fff"/>
    <text x="50" y="190.5" font-size="6" font-weight="bold" fill="#8bc34a" text-anchor="middle" font-family="Liberation Sans">JS</text>
    <text x="50" y="212.5" font-size="6" font-weight="bold" fill="#8bc34a" text-anchor="middle" font-family="Liberation Sans">JS</text>
  </svg>
  <!-- outline -->
  <div class="a" style="left:0;top:917px;width:199px;height:22px;background:#363636"></div>
  <svg class="a" style="left:8px;top:924px" width="8" height="10"><path d="M1 1 L5 4.5 L1 8 Z" fill="#bbb"/></svg>
  <div class="a" style="left:20px;top:921px;font-size:11px;font-weight:bold;color:#d8d8d8;white-space:nowrap">大纲</div>
</div>
<div class="a" style="left:700px;top:92px;width:1px;height:939px;background:#262626"></div>
<!-- right status bar -->
<div class="a" style="left:501px;top:1031px;width:916px;height:28px;background:#383838">
  <svg class="a" style="left:12px;top:6px" width="60" height="16">
    <circle cx="8.5" cy="8" r="5.8" stroke="#aaa" stroke-width="1.1" fill="none"/>
    <path d="M6.3 5.8 L10.7 10.2 M10.7 5.8 L6.3 10.2" stroke="#aaa" stroke-width="1.1"/>
    <path d="M36 2.5 L42 13.5 H30 Z M36 6.5 V10.5" stroke="#aaa" stroke-width="1.1" fill="none"/>
  </svg>
  <div class="a" style="left:31px;top:7px;font-size:12px;color:#b0b0b0">0</div>
  <div class="a" style="left:58px;top:7px;font-size:12px;color:#b0b0b0">0</div>
  <div class="a" style="left:678px;top:7px;font-size:12px;color:#b0b0b0;white-space:nowrap">行 1，列 1</div>
  <div class="a" style="left:749px;top:7px;font-size:12px;color:#b0b0b0;white-space:nowrap">空格: 2</div>
  <div class="a" style="left:803px;top:7px;font-size:12px;color:#b0b0b0;white-space:nowrap">UTF-8</div>
  <div class="a" style="left:850px;top:7px;font-size:12px;color:#b0b0b0;white-space:nowrap">LF</div>
  <div class="a" style="left:877px;top:7px;font-size:12px;color:#b0b0b0;white-space:nowrap">JSON</div>
</div>
<!-- editor -->
<div class="a" style="left:701px;top:92px;width:716px;height:939px;background:#2c2c2c;overflow:hidden">
  <div class="a" style="left:0;top:0;width:716px;height:30px;background:#383838"></div>
  <div class="a" style="left:0;top:0;width:120px;height:30px;background:#2c2c2c"></div>
<svg class="a" style="left:9px;top:8px" width="17" height="14"><path d="M4.5 1 Q2.5 1 2.5 3 V5.5 Q2.5 7 1 7 Q2.5 7 2.5 8.5 V11 Q2.5 13 4.5 13 M12.5 1 Q14.5 1 14.5 3 V5.5 Q14.5 7 16.0 7 Q14.5 7 14.5 8.5 V11 Q14.5 13 12.5 13" stroke="#f0c030" stroke-width="1.3" fill="none"/><circle cx="6.3" cy="11.5" r="0.8" fill="#f0c030"/><circle cx="8.5" cy="11.5" r="0.8" fill="#f0c030"/><circle cx="10.7" cy="11.5" r="0.8" fill="#f0c030"/></svg>
  <div class="a" style="left:32px;top:7px;font-size:13px;font-style:italic;color:#f2f2f2;white-space:nowrap">app.json</div>
  <svg class="a" style="left:96px;top:9px" width="14" height="14"><path d="M2.5 2 L11.5 11 M11.5 2 L2.5 11" stroke="#eee" stroke-width="1.5"/></svg>
  <svg class="a" style="left:610px;top:0" width="106" height="30">
    <path d="M14.5 9.5 H10 V22.5 H22 V12.5 L19 9.5 H16.5 M19 9.5 V12.5 H22" stroke="#ccc" stroke-width="1.2" fill="none"/>
    <path d="M9 12 L12 9 L12 15" stroke="#ccc" stroke-width="1.1" fill="none"/>
    <rect x="40.5" y="9.5" width="13" height="12" stroke="#ccc" stroke-width="1.2" fill="none"/><line x1="47" y1="9.5" x2="47" y2="21.5" stroke="#ccc" stroke-width="1.2"/>
    <circle cx="74" cy="15.5" r="1.1" fill="#ccc"/><circle cx="79" cy="15.5" r="1.1" fill="#ccc"/><circle cx="84" cy="15.5" r="1.1" fill="#ccc"/>
  </svg>
  <svg class="a" style="left:0;top:30px" width="300" height="24">
    <path d="M8 5.5 H9.5 M8 8.5 H9.5 M8 11.5 H9.5 M8 14.5 H9.5 M11 5.5 H21.5 M11 8.5 H21.5 M11 11.5 H21.5 M11 14.5 H21.5" stroke="#aaa" stroke-width="1"/>
    <path d="M40.5 4.5 H50.5 V17 L45.5 12.5 L40.5 17 Z" stroke="#aaa" stroke-width="1.3" fill="none"/>
    <path d="M68.5 11 H81 M73 6.5 L68.5 11 L73 15.5" stroke="#aaa" stroke-width="1.2" fill="none"/>
    <path d="M96.5 11 H109 M104.5 6.5 L109 11 L104.5 15.5" stroke="#666" stroke-width="1.2" fill="none"/>
    <path d="M172.5 6.5 L176.5 11 L172.5 15.5" stroke="#999" stroke-width="1.1" fill="none"/>
    <path d="M259.5 6.5 L263.5 11 L259.5 15.5" stroke="#999" stroke-width="1.1" fill="none"/>
  </svg>
  <div class="a" style="left:126px;top:34px;font-size:13px;color:#8c8c8c;white-space:nowrap">ymhZjz</div>
<svg class="a" style="left:183px;top:35px" width="17" height="14"><path d="M4.5 1 Q2.5 1 2.5 3 V5.5 Q2.5 7 1 7 Q2.5 7 2.5 8.5 V11 Q2.5 13 4.5 13 M12.5 1 Q14.5 1 14.5 3 V5.5 Q14.5 7 16.0 7 Q14.5 7 14.5 8.5 V11 Q14.5 13 12.5 13" stroke="#f0c030" stroke-width="1.3" fill="none"/><circle cx="6.3" cy="11.5" r="0.8" fill="#f0c030"/><circle cx="8.5" cy="11.5" r="0.8" fill="#f0c030"/><circle cx="10.7" cy="11.5" r="0.8" fill="#f0c030"/></svg>
  <div class="a" style="left:205px;top:34px;font-size:13px;color:#bdbdbd;white-space:nowrap">app.json</div>
  <div class="a" style="left:269px;top:34px;font-size:13px;color:#bdbdbd;white-space:nowrap">...</div>
  <div class="a" style="left:51.5px;top:52px;width:10px;height:32px;border:1px solid #6e7a6e;background:#202a20"></div>
  <div class="a" style="left:52px;top:84px;width:1px;height:900px;background:#444"></div>
  <div class="a" style="left:70px;top:116px;width:1px;height:384px;background:#404040"></div>
  <div class="a" style="left:70px;top:564px;width:1px;height:192px;background:#404040"></div>
  <div class="a" style="left:70px;top:852px;width:1px;height:160px;background:#404040"></div>
  <div class="a ln" style="top:53px">1</div>
  <div class="a code" style="left:52.00px;top:53px"><span style="color:#6cc5f5">{</span></div>
  <div class="a ln" style="top:85px">2</div>
  <div class="a code" style="left:69.52px;top:85px"><span style="color:#d6d2ca">&quot;pages&quot;</span><span style="color:#d8d8d8">: </span><span style="color:#6cc5f5">[</span></div>
  <div class="a ln" style="top:117px">3</div>
  <div class="a code" style="left:87.04px;top:117px"><span style="color:#e6e6e6">&quot;</span><span style="color:#ef7b5f">pages/home/index</span><span style="color:#e6e6e6">&quot;</span><span style="color:#d8d8d8">,</span></div>
  <div class="a ln" style="top:149px">4</div>
  <div class="a code" style="left:87.04px;top:149px"><span style="color:#e6e6e6">&quot;</span><span style="color:#ef7b5f">pages/mine/index</span><span style="color:#e6e6e6">&quot;</span><span style="color:#d8d8d8">,</span></div>
  <div class="a ln" style="top:181px">5</div>
  <div class="a code" style="left:87.04px;top:181px"><span style="color:#e6e6e6">&quot;</span><span style="color:#ef7b5f">pages/sizeList/index</span><span style="color:#e6e6e6">&quot;</span><span style="color:#d8d8d8">,</span></div>
  <div class="a ln" style="top:213px">6</div>
  <div class="a code" style="left:87.04px;top:213px"><span style="color:#e6e6e6">&quot;</span><span style="color:#ef7b5f">pages/preEdit/index</span><span style="color:#e6e6e6">&quot;</span><span style="color:#d8d8d8">,</span></div>
  <div class="a ln" style="top:245px">7</div>
  <div class="a code" style="left:87.04px;top:245px"><span style="color:#e6e6e6">&quot;</span><span style="color:#ef7b5f">pages/edit/index</span><span style="color:#e6e6e6">&quot;</span><span style="color:#d8d8d8">,</span></div>
  <div class="a ln" style="top:277px">8</div>
  <div class="a code" style="left:87.04px;top:277px"><span style="color:#e6e6e6">&quot;</span><span style="color:#ef7b5f">pages/camera/index</span><span style="color:#e6e6e6">&quot;</span><span style="color:#d8d8d8">,</span></div>
  <div class="a ln" style="top:309px">9</div>
  <div class="a code" style="left:87.04px;top:309px"><span style="color:#e6e6e6">&quot;</span><span style="color:#ef7b5f">pages/edit/complete/index</span><span style="color:#e6e6e6">&quot;</span><span style="color:#d8d8d8">,</span></div>
  <div class="a ln" style="top:341px">10</div>
  <div class="a code" style="left:87.04px;top:341px"><span style="color:#e6e6e6">&quot;</span><span style="color:#ef7b5f">pages/works/index</span><span style="color:#e6e6e6">&quot;</span><span style="color:#d8d8d8">,</span></div>
  <div class="a ln" style="top:373px">11</div>
  <div class="a code" style="left:87.04px;top:373px"><span style="color:#e6e6e6">&quot;</span><span style="color:#ef7b5f">pages/searchs/index</span><span style="color:#e6e6e6">&quot;</span><span style="color:#d8d8d8">,</span></div>
  <div class="a ln" style="top:405px">12</div>
  <div class="a code" style="left:87.04px;top:405px"><span style="color:#e6e6e6">&quot;</span><span style="color:#ef7b5f">pages/custom/index</span><span style="color:#e6e6e6">&quot;</span><span style="color:#d8d8d8">,</span></div>
  <div class="a ln" style="top:437px">13</div>
  <div class="a code" style="left:87.04px;top:437px"><span style="color:#e6e6e6">&quot;</span><span style="color:#ef7b5f">pages/login/index</span><span style="color:#e6e6e6">&quot;</span><span style="color:#d8d8d8">,</span></div>
  <div class="a ln" style="top:469px">14</div>
  <div class="a code" style="left:87.04px;top:469px"><span style="color:#e6e6e6">&quot;</span><span style="color:#ef7b5f">pages/admin/index</span><span style="color:#e6e6e6">&quot;</span></div>
  <div class="a ln" style="top:501px">15</div>
  <div class="a code" style="left:69.52px;top:501px"><span style="color:#6cc5f5">]</span><span style="color:#d8d8d8">,</span></div>
  <div class="a ln" style="top:533px">16</div>
  <div class="a code" style="left:69.52px;top:533px"><span style="color:#d6d2ca">&quot;window&quot;</span><span style="color:#d8d8d8">: </span><span style="color:#6cc5f5">{</span></div>
  <div class="a ln" style="top:565px">17</div>
  <div class="a code" style="left:87.04px;top:565px"><span style="color:#8fd3f5">&quot;backgroundColor&quot;</span><span style="color:#d8d8d8">: </span><span style="color:#e6e6e6">&quot;</span><span style="color:#ef7b5f">#F6F6F6</span><span style="color:#e6e6e6">&quot;</span><span style="color:#d8d8d8">,</span></div>
  <div class="a ln" style="top:597px">18</div>
  <div class="a code" style="left:87.04px;top:597px"><span style="color:#8fd3f5">&quot;backgroundTextStyle&quot;</span><span style="color:#d8d8d8">: </span><span style="color:#e6e6e6">&quot;</span><span style="color:#ef7b5f">light</span><span style="color:#e6e6e6">&quot;</span><span style="color:#d8d8d8">,</span></div>
  <div class="a ln" style="top:629px">19</div>
  <div class="a code" style="left:87.04px;top:629px"><span style="color:#8fd3f5">&quot;navigationBarBackgroundColor&quot;</span><span style="color:#d8d8d8">: </span><span style="color:#e6e6e6">&quot;</span><span style="color:#ef7b5f">#F6F6F6</span><span style="color:#e6e6e6">&quot;</span><span style="color:#d8d8d8">,</span></div>
  <div class="a ln" style="top:661px">20</div>
  <div class="a code" style="left:87.04px;top:661px"><span style="color:#8fd3f5">&quot;navigationBarTitleText&quot;</span><span style="color:#d8d8d8">: </span><span style="color:#e6e6e6">&quot;</span><span style="color:#ef7b5f">Photo</span><span style="color:#e6e6e6">&quot;</span><span style="color:#d8d8d8">,</span></div>
  <div class="a ln" style="top:693px">21</div>
  <div class="a code" style="left:87.04px;top:693px"><span style="color:#8fd3f5">&quot;navigationBarTextStyle&quot;</span><span style="color:#d8d8d8">: </span><span style="color:#e6e6e6">&quot;</span><span style="color:#ef7b5f">black</span><span style="color:#e6e6e6">&quot;</span><span style="color:#d8d8d8">,</span></div>
  <div class="a ln" style="top:725px">22</div>
  <div class="a code" style="left:87.04px;top:725px"><span style="color:#8fd3f5">&quot;navigationStyle&quot;</span><span style="color:#d8d8d8">: </span><span style="color:#e6e6e6">&quot;</span><span style="color:#ef7b5f">custom</span><span style="color:#e6e6e6">&quot;</span></div>
  <div class="a ln" style="top:757px">23</div>
  <div class="a code" style="left:69.52px;top:757px"><span style="color:#6cc5f5">}</span><span style="color:#d8d8d8">,</span></div>
  <div class="a ln" style="top:789px">24</div>
  <div class="a code" style="left:69.52px;top:789px"><span style="color:#d6d2ca">&quot;sitemapLocation&quot;</span><span style="color:#d8d8d8">: </span><span style="color:#e6e6e6">&quot;</span><span style="color:#ef7b5f">sitemap.json</span><span style="color:#e6e6e6">&quot;</span><span style="color:#d8d8d8">,</span></div>
  <div class="a ln" style="top:821px">25</div>
  <div class="a code" style="left:69.52px;top:821px"><span style="color:#d6d2ca">&quot;usingComponents&quot;</span><span style="color:#d8d8d8">: </span><span style="color:#6cc5f5">{</span></div>
  <div class="a ln" style="top:853px">26</div>
  <div class="a code" style="left:87.04px;top:853px"><span style="color:#8fd3f5">&quot;van-button&quot;</span><span style="color:#d8d8d8">: </span><span style="color:#e6e6e6">&quot;</span><span style="color:#ef7b5f">@vant/weapp/button/index</span><span style="color:#e6e6e6">&quot;</span><span style="color:#d8d8d8">,</span></div>
  <div class="a ln" style="top:885px">27</div>
  <div class="a code" style="left:87.04px;top:885px"><span style="color:#8fd3f5">&quot;van-image&quot;</span><span style="color:#d8d8d8">: </span><span style="color:#e6e6e6">&quot;</span><span style="color:#ef7b5f">@vant/weapp/image/index</span><span style="color:#e6e6e6">&quot;</span><span style="color:#d8d8d8">,</span></div>
  <div class="a ln" style="top:917px">28</div>
  <div class="a code" style="left:87.04px;top:917px"><span style="color:#8fd3f5">&quot;van-icon&quot;</span><span style="color:#d8d8d8">: </span><span style="color:#e6e6e6">&quot;</span><span style="color:#ef7b5f">@vant/weapp/icon/index</span><span style="color:#e6e6e6">&quot;</span><span style="color:#d8d8d8">,</span></div>
  <svg class="a" style="left:33px;top:57px" width="12" height="8"><path d="M1 1.5 L6 6 L11 1.5" stroke="#c8c8c8" stroke-width="1.2" fill="none"/></svg>
  <svg class="a" style="left:33px;top:89px" width="12" height="8"><path d="M1 1.5 L6 6 L11 1.5" stroke="#c8c8c8" stroke-width="1.2" fill="none"/></svg>
  <svg class="a" style="left:33px;top:537px" width="12" height="8"><path d="M1 1.5 L6 6 L11 1.5" stroke="#c8c8c8" stroke-width="1.2" fill="none"/></svg>
  <svg class="a" style="left:33px;top:825px" width="12" height="8"><path d="M1 1.5 L6 6 L11 1.5" stroke="#c8c8c8" stroke-width="1.2" fill="none"/></svg>
  <div class="a" style="left:701px;top:52px;width:1px;height:887px;background:#414141"></div>
  <div class="a" style="left:702px;top:52px;width:14px;height:887px;background:#2e2e2e"></div>
  <div class="a" style="left:706px;top:52px;width:5px;height:11px;background:#a8a8a8"></div>
  <div class="a" style="left:706px;top:648px;width:5px;height:11px;background:#a8a8a8"></div>
</div>
</body></html>
